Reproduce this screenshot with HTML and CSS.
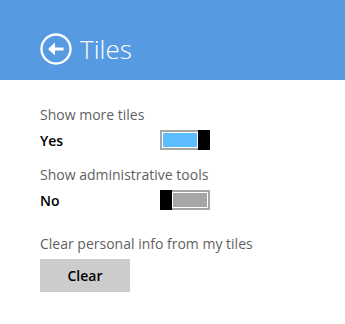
FILE: index.html
```html
<!DOCTYPE html>
<html lang="en">
<head>
    <meta charset="UTF-8">
    <title>Tiles</title>
    <link rel="stylesheet" href="styles.css">
</head>
<body>
<div class="header">
    <svg class="back-icon" width="32" height="32" viewBox="0 0 32 32">
        <circle cx="16" cy="16" r="14.5" fill="none" stroke="#fff" stroke-width="2.4"/>
        <path d="M8 16 L15 9.5 L15 14.5 L23.5 14.5 L23.5 17.5 L15 17.5 L15 22.5 Z" fill="#fff"/>
    </svg>
    <span class="title">Tiles</span>
</div>
<div class="settings">
    <div class="group">
        <div class="label">Show more tiles</div>
        <div class="row">
            <span class="value">Yes</span>
            <div class="toggle toggle-on">
                <div class="track"></div>
                <div class="thumb"></div>
            </div>
        </div>
    </div>
    <div class="group">
        <div class="label">Show administrative tools</div>
        <div class="row">
            <span class="value">No</span>
            <div class="toggle toggle-off">
                <div class="thumb"></div>
                <div class="track"></div>
            </div>
        </div>
    </div>
    <div class="group group-clear">
        <div class="label">Clear personal info from my tiles</div>
        <button class="btn-clear">Clear</button>
    </div>
</div>
</body>
</html>
```

FILE: styles.css
```css
* {
    margin: 0;
    padding: 0;
    box-sizing: border-box;
}

html,
body {
    width: 100%;
    height: 100%;
    background-color: #fff;
    font-family: "Open Sans", "Noto Sans", sans-serif;
}

.header {
    height: 80px;
    padding: 18px 0 0 40px;
    background-color: #569be1;
    display: flex;
    align-items: center;
    color: #fff;
}

.back-icon {
    display: block;
}

.title {
    margin-left: 8px;
    font-size: 26px;
    font-weight: 300;
    line-height: 32px;
}

.settings {
    padding: 25px 40px 0;
}

.group + .group {
    margin-top: 15px;
}

.group-clear {
    margin-top: 24px !important;
}

.label {
    font-size: 14px;
    line-height: 20px;
    color: #5f5f5f;
}

.row {
    width: 170px;
    height: 20px;
    margin-top: 5px;
    display: flex;
    align-items: center;
    justify-content: space-between;
}

.value {
    font-size: 14px;
    font-weight: 600;
    line-height: 22px;
    padding-top: 2px;
    color: #000;
}

.toggle {
    width: 50px;
    height: 20px;
    display: flex;
}

.track {
    flex: 1;
    border: 2px solid #a6a6a6;
    box-shadow: inset 0 0 0 1px #fff;
}

.toggle-on .track {
    border-right: none;
    background-color: #5bbdff;
}

.toggle-off .track {
    border-left: none;
    background-color: #a6a6a6;
}

.thumb {
    width: 12px;
    background-color: #000;
}

.btn-clear {
    width: 90px;
    height: 33px;
    margin-top: 5px;
    border: none;
    background-color: #cccccc;
    font-family: "Open Sans", "Noto Sans", sans-serif;
    font-size: 14px;
    font-weight: 600;
    color: #000;
}
```
